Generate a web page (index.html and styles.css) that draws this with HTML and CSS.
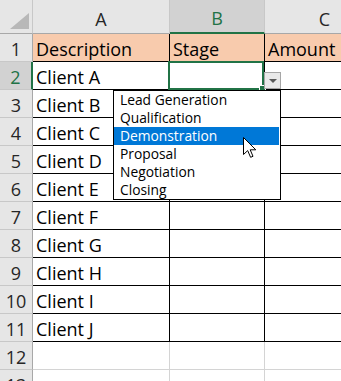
FILE: index.html
```html
<!DOCTYPE html>
<html>
<head>
<meta charset="utf-8">
<link rel="stylesheet" href="styles.css">
</head>
<body>
<div class="sheet">
  <div class="grid">
    <div class="ch corner"><span class="tri"></span></div>
    <div class="ch">A</div>
    <div class="ch sel">B</div>
    <div class="ch">C</div>

    <div class="rh">1</div>
    <div class="c hd">Description</div>
    <div class="c hd">Stage</div>
    <div class="c hd">Amount</div>

    <div class="rh rsel">2</div>
    <div class="c">Client A</div>
    <div class="c"></div>
    <div class="c"></div>

    <div class="rh">3</div>
    <div class="c">Client B</div>
    <div class="c"></div>
    <div class="c"></div>

    <div class="rh">4</div>
    <div class="c">Client C</div>
    <div class="c"></div>
    <div class="c"></div>

    <div class="rh">5</div>
    <div class="c">Client D</div>
    <div class="c"></div>
    <div class="c"></div>

    <div class="rh">6</div>
    <div class="c">Client E</div>
    <div class="c"></div>
    <div class="c"></div>

    <div class="rh">7</div>
    <div class="c">Client F</div>
    <div class="c"></div>
    <div class="c"></div>

    <div class="rh">8</div>
    <div class="c">Client G</div>
    <div class="c"></div>
    <div class="c"></div>

    <div class="rh">9</div>
    <div class="c">Client H</div>
    <div class="c"></div>
    <div class="c"></div>

    <div class="rh">10</div>
    <div class="c">Client I</div>
    <div class="c"></div>
    <div class="c"></div>

    <div class="rh">11</div>
    <div class="c">Client J</div>
    <div class="c"></div>
    <div class="c"></div>

    <div class="rh">12</div>
    <div class="c e"></div>
    <div class="c e"></div>
    <div class="c e"></div>

    <div class="rh">13</div>
    <div class="c e"></div>
    <div class="c e"></div>
    <div class="c e"></div>
  </div>

  <div class="active"><span class="handle"></span></div>
  <div class="ddbtn"><span class="arrow"></span></div>

  <ul class="list">
    <li>Lead Generation</li>
    <li>Qualification</li>
    <li class="hl">Demonstration</li>
    <li>Proposal</li>
    <li>Negotiation</li>
    <li>Closing</li>
  </ul>

  <svg class="cursor" width="15" height="22" viewBox="0 0 15 22">
    <path d="M0.5 0.5 L0.5 17.5 L4.7 13.6 L7.6 20.3 L10 19.3 L7.2 12.8 L12.8 12.8 Z" fill="#fff" stroke="#000" stroke-width="1" stroke-linejoin="miter"/>
  </svg>
</div>
</body>
</html>
```
FILE: styles.css
```css
html, body {
  margin: 0;
  padding: 0;
  background: #fff;
  overflow: hidden;
}

.sheet {
  position: relative;
  width: 341px;
  height: 381px;
  overflow: hidden;
  font-family: "Open Sans", "Noto Sans", sans-serif;
}

.grid {
  display: grid;
  grid-template-columns: 33px 137px 95px 120px;
  grid-template-rows: 34px repeat(13, 28px);
}

.ch {
  background: #e6e6e6;
  border-right: 1px solid #c8c8c8;
  border-bottom: 1px solid #a8a8a8;
  display: flex;
  align-items: center;
  justify-content: center;
  font-size: 18px;
  color: #262626;
  padding-top: 4px;
  box-sizing: border-box;
}

.ch.corner {
  position: relative;
}

.tri {
  position: absolute;
  right: 3px;
  bottom: 4px;
  width: 0;
  height: 0;
  border-left: 19px solid transparent;
  border-bottom: 16px solid #b8b8b8;
}

.ch.sel {
  background: #d2d2d2;
  color: #217346;
  border-bottom: 2px solid #217346;
}

.rh {
  background: #e6e6e6;
  border-right: 1px solid #a8a8a8;
  border-bottom: 1px solid #c8c8c8;
  display: flex;
  align-items: center;
  justify-content: center;
  font-size: 18px;
  color: #262626;
  padding-top: 2px;
  box-sizing: border-box;
}

.rh.rsel {
  background: #d2d2d2;
  color: #217346;
  border-right: 2px solid #217346;
}

.c {
  border-right: 1px solid #000;
  border-bottom: 1px solid #000;
  box-sizing: border-box;
  font-size: 18px;
  color: #000;
  padding-left: 3px;
  padding-top: 2px;
  display: flex;
  align-items: center;
  white-space: nowrap;
  overflow: hidden;
}

.c.hd {
  background: #f8cbad;
}

.c.e {
  border-right-color: #d4d4d4;
  border-bottom-color: #d4d4d4;
}

.active {
  position: absolute;
  left: 168px;
  top: 61px;
  width: 96px;
  height: 29px;
  border: 2px solid #217346;
  box-sizing: border-box;
}

.handle {
  position: absolute;
  right: -4px;
  bottom: -4px;
  width: 5px;
  height: 5px;
  background: #217346;
  border: 1px solid #fff;
}

.ddbtn {
  position: absolute;
  left: 264px;
  top: 72px;
  width: 17px;
  height: 17px;
  box-sizing: border-box;
  border: 1px solid #a6a6a6;
  background: #e9e9e9;
  display: flex;
  align-items: center;
  justify-content: center;
}

.arrow {
  width: 0;
  height: 0;
  border-left: 4px solid transparent;
  border-right: 4px solid transparent;
  border-top: 4px solid #5a5a5a;
}

.list {
  position: absolute;
  left: 113px;
  top: 90px;
  width: 168px;
  height: 110px;
  margin: 0;
  padding: 0;
  list-style: none;
  background: #fff;
  border: 1px solid #000;
  box-sizing: border-box;
  font-family: "Open Sans", "Noto Sans", sans-serif;
  font-size: 13.8px;
  color: #000;
}

.list li {
  height: 18px;
  line-height: 18px;
  padding-left: 6px;
  white-space: nowrap;
}

.list li.hl {
  background: #0078d7;
  color: #fff;
  margin-right: 1px;
}

.cursor {
  position: absolute;
  left: 243px;
  top: 137px;
}
```
